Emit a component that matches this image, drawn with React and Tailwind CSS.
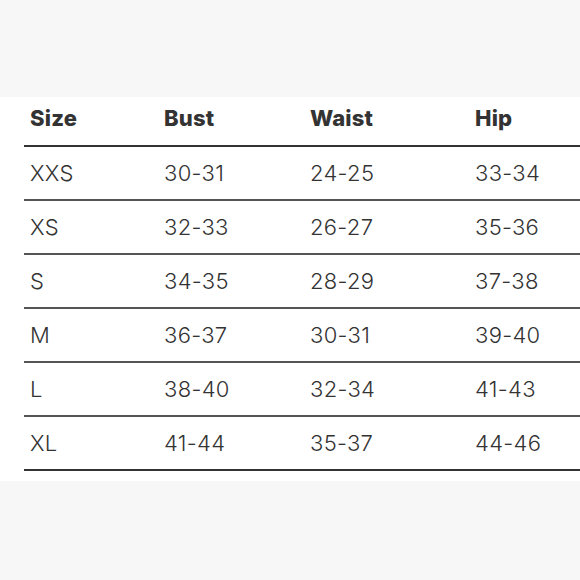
const rows = [
  ["XXS", "30-31", "24-25", "33-34"],
  ["XS", "32-33", "26-27", "35-36"],
  ["S", "34-35", "28-29", "37-38"],
  ["M", "36-37", "30-31", "39-40"],
  ["L", "38-40", "32-34", "41-43"],
  ["XL", "41-44", "35-37", "44-46"],
];

const cols = ["w-[134px]", "w-[146px]", "w-[165px]", "flex-1"];

export default function App() {
  return (
    <div className="flex h-[580px] w-[580px] flex-col bg-[#f7f7f7] text-[#333]" style={{ fontFamily: "Inter, 'Liberation Sans', sans-serif" }}>
      <div className="h-[97px]" />
      <div className="bg-white pb-[10px] pl-[24px]">
        <div className="flex h-[50px] items-center border-b-2 border-[#333] pb-[5px] pl-[6px] text-[22px] font-extrabold tracking-[0.2px]">
          {["Size", "Bust", "Waist", "Hip"].map((h, i) => (
            <div key={h} className={cols[i]}>{h}</div>
          ))}
        </div>
        {rows.map((r, ri) => (
          <div key={ri} className={`flex h-[54px] items-center border-b-2 pl-[6px] text-[22px] font-light tracking-[0.3px] ${ri === rows.length - 1 ? "border-[#333]" : "border-[#555]"}`}>
            {r.map((c, i) => (
              <div key={i} className={cols[i]}>{c}</div>
            ))}
          </div>
        ))}
      </div>
      <div className="flex-1" />
    </div>
  );
}
